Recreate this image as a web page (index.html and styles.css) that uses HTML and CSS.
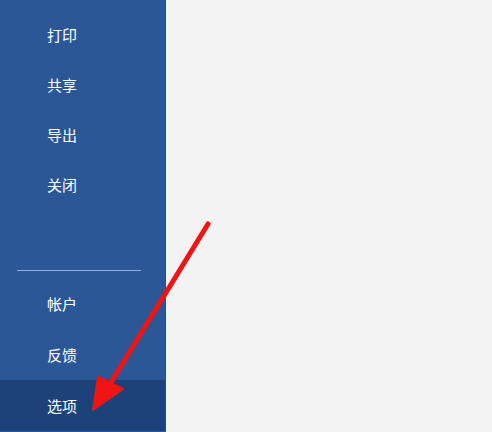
FILE: index.html
```html
<!DOCTYPE html>
<html lang="zh-CN">
<head>
<meta charset="utf-8">
<title>文件</title>
<link rel="stylesheet" href="styles.css">
</head>
<body>
<div class="backstage">
  <nav class="sidebar">
    <ul class="menu menu-top">
      <li class="menu-item">打印</li>
      <li class="menu-item">共享</li>
      <li class="menu-item">导出</li>
      <li class="menu-item">关闭</li>
    </ul>
    <div class="divider"></div>
    <ul class="menu menu-bottom">
      <li class="menu-item">帐户</li>
      <li class="menu-item">反馈</li>
      <li class="menu-item is-active">选项</li>
    </ul>
  </nav>
  <main class="content"></main>
  <svg class="pointer" width="492" height="432" viewBox="0 0 492 432">
    <line x1="208" y1="224" x2="110" y2="384" stroke="#f01414" stroke-width="5" stroke-linecap="round"/>
    <polygon points="93,410 98,377 123,389" fill="#f01414" stroke="#f01414" stroke-width="2" stroke-linejoin="round"/>
  </svg>
</div>
</body>
</html>
```
FILE: styles.css
```css
html, body {
  margin: 0;
  padding: 0;
  height: 100%;
}

body {
  font-family: "Microsoft YaHei", "Noto Sans CJK SC", sans-serif;
  background: #f3f3f3;
}

.backstage {
  position: relative;
  display: flex;
  height: 432px;
  overflow: hidden;
}

.sidebar {
  width: 166px;
  flex: none;
  background: #2b5797;
  border-right: 1px solid #27508c;
  display: flex;
  flex-direction: column;
  padding-top: 10px;
  box-sizing: border-box;
}

.menu {
  list-style: none;
  margin: 0;
  padding: 0;
}

.menu-item {
  height: 50px;
  line-height: 50px;
  padding-left: 47px;
  color: #ffffff;
  font-size: 15px;
}

.menu-bottom .menu-item {
  height: 51px;
  line-height: 51px;
}

.menu-item.is-active {
  background: #1c4279;
}

.divider {
  margin: 60px 24px 7px 17px;
  height: 1px;
  background: #8aaede;
}

.content {
  flex: 1;
  background: #f3f3f3;
}

.pointer {
  position: absolute;
  left: 0;
  top: 0;
  pointer-events: none;
}
```
